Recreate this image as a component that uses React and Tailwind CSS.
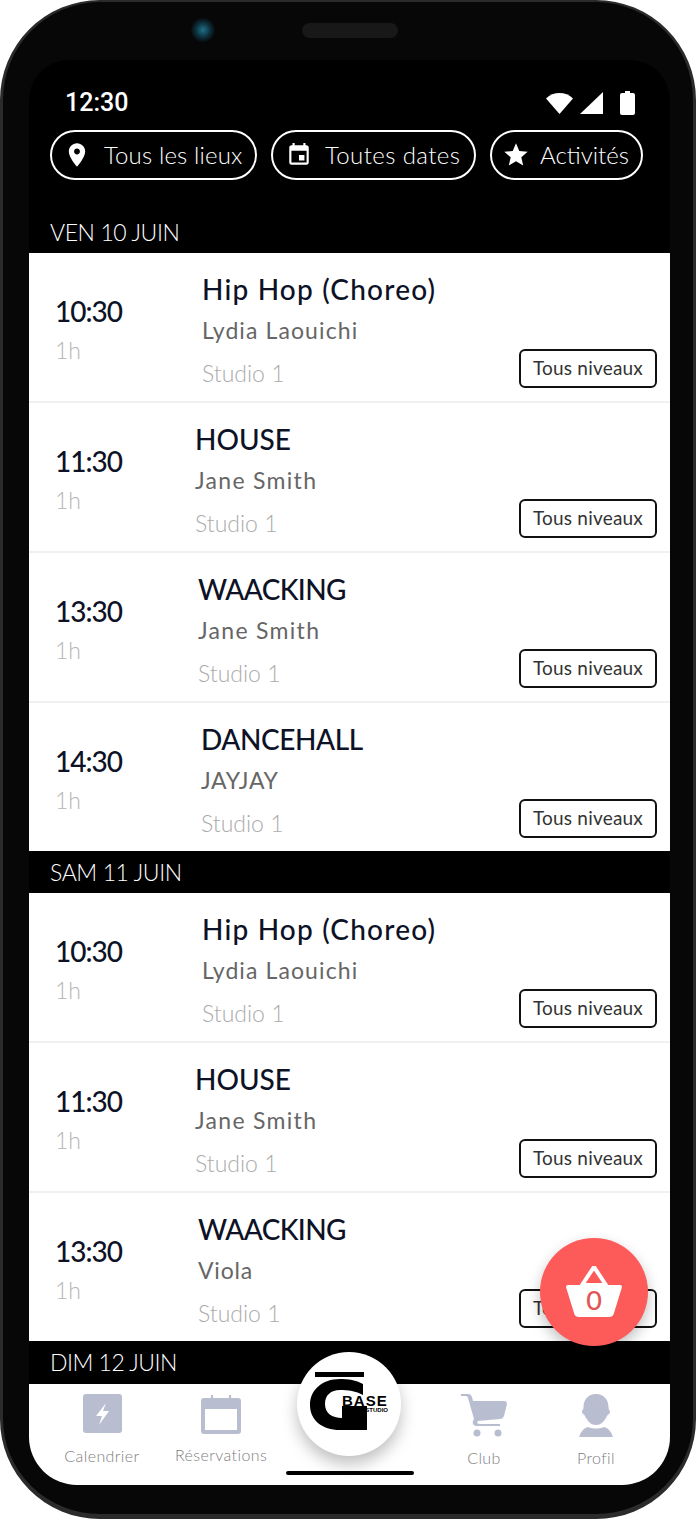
import React from "react";

const days = [
  {
    label: "VEN 10 JUIN",
    sessions: [
      { time: "10:30", title: "Hip Hop (Choreo)", teacher: "Lydia Laouichi", timeCol: "w-[173px]", titleTrack: "tracking-[1.2px]", teacherTrack: "tracking-[1.1px]" },
      { time: "11:30", title: "HOUSE", teacher: "Jane Smith", timeCol: "w-[166px]", titleTrack: "tracking-[0px]", teacherTrack: "tracking-[1.3px]" },
      { time: "13:30", title: "WAACKING", teacher: "Jane Smith", timeCol: "w-[169px]", titleTrack: "tracking-[-0.6px]", teacherTrack: "tracking-[1.3px]" },
      { time: "14:30", title: "DANCEHALL", teacher: "JAYJAY", timeCol: "w-[172px]", titleTrack: "tracking-[-0.4px]", teacherTrack: "tracking-[0.6px]" },
    ],
  },
  {
    label: "SAM 11 JUIN",
    sessions: [
      { time: "10:30", title: "Hip Hop (Choreo)", teacher: "Lydia Laouichi", timeCol: "w-[173px]", titleTrack: "tracking-[1.2px]", teacherTrack: "tracking-[1.1px]" },
      { time: "11:30", title: "HOUSE", teacher: "Jane Smith", timeCol: "w-[166px]", titleTrack: "tracking-[0px]", teacherTrack: "tracking-[1.3px]" },
      { time: "13:30", title: "WAACKING", teacher: "Viola", timeCol: "w-[169px]", titleTrack: "tracking-[-0.6px]", teacherTrack: "tracking-[0.8px]" },
    ],
  },
];

function Pill({ icon, label, className }) {
  return (
    <div className={`flex h-[50px] items-center rounded-full border-2 border-white text-[24px] font-light text-white ${className}`}>
      {icon}
      <span>{label}</span>
    </div>
  );
}

function Session({ session, last }) {
  return (
    <div className={`flex bg-white ${last ? "h-[148px]" : "h-[150px] border-b-2 border-[#f0f0f0]"}`}>
      <div className={`flex shrink-0 flex-col pl-[26px] pt-[40px] ${session.timeCol}`}>
        <span className="text-[28px] leading-[36px] font-medium tracking-[-1px] text-[#0d1226]">{session.time}</span>
        <span className="mt-[6px] text-[23px] leading-[30px] font-light text-[#b5b5b5]">1h</span>
      </div>
      <div className="flex flex-col">
        <span className={`mt-[17px] text-[28px] leading-[38px] font-medium whitespace-nowrap text-[#0d1226] ${session.titleTrack}`}>{session.title}</span>
        <span className={`mt-[6px] text-[23px] leading-[32px] text-[#666666] ${session.teacherTrack}`}>{session.teacher}</span>
        <span className="mt-[12px] text-[23px] leading-[30px] font-light text-[#ababab]">Studio 1</span>
      </div>
      <div className="mt-[96px] mr-[13px] ml-auto flex h-[39px] w-[138px] shrink-0 items-center justify-center rounded-[6px] border-2 border-[#111111] text-[19px] tracking-[0.2px] text-[#333333]">
        Tous niveaux
      </div>
    </div>
  );
}

function NavItem({ icon, label, className }) {
  return (
    <div className={`flex shrink-0 flex-col items-center pt-[10px] ${className}`}>
      {icon}
      <span className="text-[16px] leading-[20px] font-light tracking-[0.4px] text-[#808080]">{label}</span>
    </div>
  );
}

export default function App() {
  return (
    <div className="h-[1519px] w-[696px] overflow-hidden bg-white font-['Lato',sans-serif]">
      <div className="flex h-full flex-col rounded-[100px] border-x-[3px] border-t-[2px] border-b-[5px] border-[#2b2b2b] bg-[#070707] pl-[26px] pr-[23px] pb-[29px]">
        {/* camera and speaker */}
        <div className="flex h-[58px] shrink-0 items-center pb-[2px]">
          <div className="ml-[162px] h-[24px] w-[24px] rounded-full bg-[radial-gradient(circle,#1f6f8a_0%,#0d2c38_45%,#070707_75%)]" />
          <div className="ml-[87px] h-[15px] w-[96px] rounded-full bg-[#181818]" />
        </div>

        <div className="relative flex min-h-0 flex-1 flex-col overflow-hidden rounded-t-[40px] rounded-b-[48px] bg-black">
          <div className="flex h-[70px] shrink-0 items-center justify-between pl-[36px] pr-[35px] pt-[16px]">
            <span className="font-['Roboto',sans-serif] text-[25px] font-medium text-white">12:30</span>
            <div className="flex items-center">
              <svg width="27" height="21" viewBox="0 0 27 21"><path d="M13.5 21L0 5.5C7.5-1.8 19.5-1.8 27 5.5z" fill="#fff" /></svg>
              <svg className="ml-[7px]" width="23" height="22" viewBox="0 0 23 22"><path d="M23 0v22H0z" fill="#fff" /></svg>
              <svg className="ml-[17px]" width="15" height="24" viewBox="0 0 15 24"><path d="M5 0h5v2h3a2 2 0 0 1 2 2v18a2 2 0 0 1-2 2H2a2 2 0 0 1-2-2V4a2 2 0 0 1 2-2h3z" fill="#fff" /></svg>
            </div>
          </div>

          <div className="flex shrink-0 pl-[21px]">
            <Pill
              className="w-[207px] pl-[11px] tracking-[0.15px]"
              label="Tous les lieux"
              icon={<svg className="mr-[13px]" width="28" height="28" viewBox="0 0 24 24" fill="#fff"><path d="M12 2C8.13 2 5 5.13 5 9c0 5.25 7 13 7 13s7-7.75 7-13c0-3.87-3.13-7-7-7zm0 9.5c-1.38 0-2.5-1.12-2.5-2.5s1.12-2.5 2.5-2.5 2.5 1.12 2.5 2.5-1.12 2.5-2.5 2.5z" /></svg>}
            />
            <Pill
              className="ml-[14px] w-[205px] pl-[13px] tracking-[0.4px]"
              label="Toutes dates"
              icon={<svg className="mr-[13px]" width="26" height="26" viewBox="0 0 24 24" fill="#fff"><path d="M17 12h-5v5h5v-5zM16 1v2H8V1H6v2H5c-1.11 0-1.99.9-1.99 2L3 19c0 1.1.89 2 2 2h14c1.1 0 2-.9 2-2V5c0-1.1-.9-2-2-2h-1V1h-2zm3 18H5V8h14v11z" /></svg>}
            />
            <Pill
              className="ml-[14px] w-[153px] pl-[10px]"
              label="Activités"
              icon={<svg className="mr-[10px]" width="28" height="28" viewBox="0 0 24 24" fill="#fff"><path d="M12 17.27L18.18 21l-1.64-7.03L22 9.24l-7.19-.61L12 2 9.19 8.63 2 9.24l5.46 4.73L5.82 21z" /></svg>}
            />
          </div>

          <div className="flex min-h-0 flex-1 flex-col overflow-hidden">
            {days.map((day, d) => (
              <div key={day.label}>
                <div className={`flex items-center pl-[21px] text-[23px] font-light tracking-[-0.4px] text-white ${d === 0 ? "h-[73px] pt-[31px]" : "h-[42px]"}`}>
                  {day.label}
                </div>
                {day.sessions.map((s, i) => (
                  <Session key={s.time + i} session={s} last={i === day.sessions.length - 1} />
                ))}
              </div>
            ))}
            <div className="flex h-[43px] shrink-0 items-center pl-[21px] text-[23px] font-light tracking-[-0.5px] text-white">DIM 12 JUIN</div>
            <div className="flex h-[101px] shrink-0 bg-white">
              <NavItem
                className="ml-[35px] w-[76px]"
                label="Calendrier"
                icon={
                  <svg className="mb-[13px]" width="39" height="39" viewBox="0 0 39 39">
                    <rect width="39" height="39" rx="3" fill="#b9bdd0" />
                    <path d="M23 9L13 22h6l-3 9 10-14h-6z" fill="#fff" />
                  </svg>
                }
              />
              <NavItem
                className="ml-[31px] w-[100px]"
                label="Réservations"
                icon={
                  <svg className="mb-[11px]" width="40" height="40" viewBox="0 0 40 40">
                    <path d="M3 4h7V1h2v3h16V1h2v3h7a3 3 0 0 1 3 3v30a3 3 0 0 1-3 3H3a3 3 0 0 1-3-3V7a3 3 0 0 1 3-3zm1 11v21h32V15z" fill="#b9bdd0" />
                  </svg>
                }
              />
              <NavItem
                className="ml-[188px] w-[50px]"
                label="Club"
                icon={
                  <svg className="mb-[10px]" width="46" height="44" viewBox="0 0 46 44">
                    <path d="M0 0h7c2 0 3 1 4 3l1 4h31c2 0 3 1 3 3l-3 12c-1 2-2 3-4 3l-22 2c-1 0-1 3 1 3h21v2H16c-3 0-5-2-4-5l1-2L7 4c0-1-1-2-2-2H0z" fill="#b9bdd0" />
                    <circle cx="16" cy="39" r="3.5" fill="#b9bdd0" />
                    <circle cx="37" cy="39" r="3.5" fill="#b9bdd0" />
                  </svg>
                }
              />
              <NavItem
                className="ml-[67px] w-[40px]"
                label="Profil"
                icon={
                  <svg className="mb-[11px]" width="34" height="43" viewBox="0 0 34 43">
                    <path d="M17 0c8 0 12.500 6 12.500 13 0 3 1.500 3 1.500 5s-2 2-3 4c-2 4-5 9-11 9S8 26 6 22c-1-2-3-2-3-4s1.500-2 1.500-5C4.500 6 9 0 17 0z" fill="#b9bdd0" />
                    <path d="M9 33c3 1 5 1.500 8 1.500s5-.5 8-1.500c4 1 7 4 9 10H0c2-6 5-9 9-10z" fill="#b9bdd0" />
                  </svg>
                }
              />
            </div>
          </div>

          <div className="absolute bottom-[10px] left-[257px] h-[4px] w-[128px] rounded-full bg-black" />

          <div className="absolute left-[268px] top-[1292px] flex h-[104px] w-[104px] items-center justify-center rounded-full bg-white shadow-[0_8px_16px_rgba(0,0,0,0.25)]">
            <div className="relative h-[70px] w-[84px]">
              <div className="absolute left-[8px] top-[3px] h-[5px] w-[49px] bg-black" />
              <svg className="absolute left-[3px] top-[10px]" width="57" height="51" viewBox="0 0 57 51">
                <path d="M53 5C46 1 38 0 30 0 12 0 0 11 0 26 0 41 12 51 30 51H57V27H32V39C22 39 15 34 15 25 15 16 21 11 30 11 38 11 46 12 53 16Z" fill="#000" />
              </svg>
              <span className="absolute left-[35px] top-[25px] font-['Liberation_Sans',sans-serif] text-[15px] leading-[14px] font-bold tracking-[1px] text-black">BASE</span>
              <span className="absolute right-[3px] top-[38px] font-['Liberation_Sans',sans-serif] text-[6px] leading-[6px] font-bold text-black">STUDIO</span>
            </div>
          </div>

          <div className="absolute left-[511px] top-[1178px] flex h-[108px] w-[108px] items-center justify-center rounded-full bg-[#fd5a5a] shadow-[0_6px_14px_rgba(0,0,0,0.25)]">
            <div className="relative h-[52px] w-[56px]">
              <svg width="56" height="52" viewBox="0 0 56 52">
                <path d="M28 1L16 19h24z" fill="#fd5a5a" stroke="#fff" strokeWidth="4" strokeLinejoin="round" />
                <path d="M2 19h52a2 2 0 0 1 2 2l-8 26a5 5 0 0 1-5 4H13a5 5 0 0 1-5-4L0 21a2 2 0 0 1 2-2z" fill="#fff" />
              </svg>
              <span className="absolute inset-x-0 top-[20px] text-center text-[27px] leading-[28px] font-medium text-[#e25555]">0</span>
            </div>
          </div>
        </div>
      </div>
    </div>
  );
}
